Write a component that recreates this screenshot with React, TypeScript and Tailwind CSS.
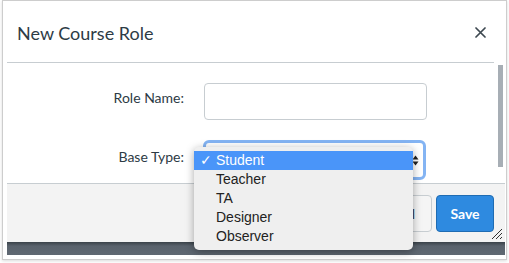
import React from "react";

export default function App() {
  const items = ["Student", "Teacher", "TA", "Designer", "Observer"];
  return (
    <div className="relative w-[509px] h-[263px] bg-white overflow-hidden" style={{ fontFamily: "Lato, 'Noto Sans', sans-serif" }}>
      <div className="ml-[2px] w-[505px] h-[260px] border border-[#cdcdcd] shadow-[0_1px_3px_rgba(0,0,0,0.15)] flex flex-col pl-[4px] pr-[1px] bg-white">
        {/* header */}
        <div className="h-[62px] mr-[11px] border-b border-[#c7cdd1] flex items-center justify-between pl-[10px] pr-[8px]">
          <div className="text-[18px] text-[#2d3b45] leading-none pt-[2px]">New Course Role</div>
          <svg width="11" height="11" viewBox="0 0 11 11" className="mt-[2px]">
            <path d="M1 1 L10 10 M10 1 L1 10" stroke="#3d4850" strokeWidth="1.7" strokeLinecap="round" />
          </svg>
        </div>
        {/* body */}
        <div className="relative h-[120px] pt-[20px] text-[14px] text-[#2d3b45]">
          <div className="absolute right-[2px] top-[2px] w-[5px] h-[102px] bg-[#a7aeb5]" />
          <div className="flex items-center">
            <div className="w-[177px] text-right mb-[8px]">Role Name:</div>
            <div className="ml-[20px] w-[223px] h-[37px] border border-[#c7cdd1] rounded-[4px] bg-white" />
          </div>
          <div className="flex items-center mt-[20px]">
            <div className="w-[177px] text-right mb-[8px]">Base Type:</div>
            <div className="ml-[19px] w-[223px] h-[40px] rounded-[6px] border-[3px] border-[#84b4f3] bg-white flex items-center justify-end pr-[4px]">
              <svg width="7" height="11" viewBox="0 0 7 11">
                <path d="M3.5 0.5 L6.5 4.5 L0.5 4.5 Z M3.5 10.5 L6.5 6.5 L0.5 6.5 Z" fill="#222" />
              </svg>
            </div>
          </div>
        </div>
        {/* footer */}
        <div className="relative h-[59px] border-t border-[#c7cdd1] bg-[#f3f3f3] flex justify-end items-start pt-[11px] pr-[11px]">
          <div className="h-[37px] px-[16px] border border-[#c7cdd1] rounded-[4px] bg-[#f5f5f5] text-[14px] text-[#2d3b45] flex items-center">Cancel</div>
          <div className="ml-[4px] w-[58px] h-[37px] rounded-[4px] bg-[#2e8ae0] border border-[#1f6cb3] text-white font-bold text-[14px] flex items-center justify-center">Save</div>
          <svg width="12" height="12" viewBox="0 0 12 12" className="absolute right-[2px] bottom-[2px]">
            <path d="M11 1 L1 11 M11 5 L5 11 M11 9 L9 11" stroke="#333" strokeWidth="1" />
          </svg>
        </div>
        <div className="h-[13px] bg-[linear-gradient(#3a4249,#59626c_4px,#5f6872)]" />
      </div>
      {/* dropdown menu */}
      <div className="absolute left-[194px] top-[147px] w-[219px] rounded-[5px] bg-[#efefef] shadow-[0_2px_8px_rgba(0,0,0,0.35)] py-[4px]" style={{ fontFamily: "'Liberation Sans', Arial, sans-serif" }}>
        {items.map((it, i) => (
          <div key={it} className={`relative h-[19px] pl-[22px] text-[14px] leading-[19px] ${i === 0 ? "bg-[#4a95f9] text-white" : "text-[#222]"}`}>
            {i === 0 && <span className="absolute left-[6px] top-0">✓</span>}
            {it}
          </div>
        ))}
      </div>
    </div>
  );
}
